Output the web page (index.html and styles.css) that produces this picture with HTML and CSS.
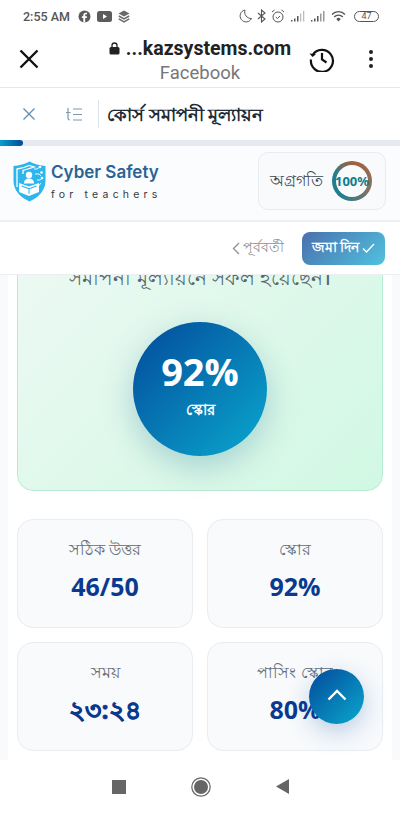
FILE: index.html
```html
<!DOCTYPE html>
<html lang="bn">

<head>
    <meta charset="UTF-8">
    <title>Cyber Safety for teachers</title>
    <link rel="stylesheet" href="styles.css">
</head>

<body>
<div class="phone">
    <div class="status">
        <span class="status__time">2:55 AM</span>
        <svg class="status__app" width="13" height="13" viewBox="0 0 13 13">
            <circle cx="6.5" cy="6.5" r="6" fill="#5c5c5c" />
            <path d="M7.2 12.5V8h1.5l.3-1.8H7.2V5.2c0-.6.2-.9.9-.9H9V2.7H7.7C6 2.7 5.3 3.7 5.3 5v1.2H3.9V8h1.4v4.5z" fill="#fff" />
        </svg>
        <svg class="status__app" width="15" height="11" viewBox="0 0 15 11">
            <rect width="15" height="11" rx="2.5" fill="#5c5c5c" />
            <path d="M6 3l4 2.5L6 8z" fill="#fff" />
        </svg>
        <svg class="status__app" width="12" height="13" viewBox="0 0 12 13">
            <path d="M6 .5l5.5 3L6 6.5l-5.500-3z" fill="#6a6a6a" />
            <path d="M.8 6L6 8.800 11.200 6M.8 8.800L6 11.800l5.200-3" fill="none" stroke="#6a6a6a" stroke-width="1.500" />
        </svg>
        <div class="status__right">
            <svg width="13" height="14" viewBox="0 0 13 14">
                <path d="M6 1a6 6 0 1 0 6.500 8.500A6.500 6.500 0 0 1 6 1z" fill="none" stroke="#555" stroke-width="1" />
            </svg>
            <svg width="9" height="14" viewBox="0 0 9 14">
                <path d="M1 4l7 6-3.500 3V1L8 4l-7 6" fill="none" stroke="#555" stroke-width="1.100" />
            </svg>
            <svg width="14" height="14" viewBox="0 0 14 14">
                <circle cx="7" cy="8" r="5" fill="none" stroke="#555" />
                <path d="M1 3l2.500-2M13 3l-2.500-2M4.800 8l1.700 1.500L9 7" fill="none" stroke="#555" />
            </svg>
            <svg width="15" height="12" viewBox="0 0 15 12">
                <path d="M1 10h1.500v1.500H1zM4 8.500h1.500v3H4zM7 6h1.500v5.500H7z" fill="#555" />
                <path d="M10 3.500h1.300v8H10zM13 1h1.300v10.500H13z" fill="#bbb" />
            </svg>
            <svg width="15" height="12" viewBox="0 0 15 12">
                <path d="M1 10h1.500v1.500H1zM4 8.500h1.500v3H4zM7 6h1.500v5.500H7z" fill="#555" />
                <path d="M10 3.500h1.500v8H10zM13 1h1.500v10.500H13z" fill="#999" />
            </svg>
            <svg class="status__wifi" width="15" height="11" viewBox="0 0 15 11">
                <path d="M1 3.500a9 9 0 0 1 13 0M3.200 6a6 6 0 0 1 8.600 0" fill="none" stroke="#555" stroke-width="1.300" />
                <path d="M5.300 8a3 3 0 0 1 4.400 0L7.500 10.500z" fill="#555" />
            </svg>
            <span class="status__battery">47</span>
        </div>
    </div>

    <header class="browser">
        <svg class="browser__close" width="20" height="20" viewBox="0 0 20 20">
            <path d="M1.500 1.500l17 17M18.500 1.500l-17 17" stroke="#111" stroke-width="2.400" />
        </svg>
        <div class="browser__address">
            <div class="browser__url">
                <svg width="11" height="13" viewBox="0 0 11 13">
                    <path d="M3 5V3.500a2.500 2.500 0 0 1 5 0V5" fill="none" stroke="#222" stroke-width="1.300" />
                    <rect x=".5" y="5" width="10" height="7.500" rx="1.500" fill="#222" />
                </svg>
                <span>...kazsystems.com</span>
            </div>
            <div class="browser__source">Facebook</div>
        </div>
        <svg class="browser__history" width="26" height="26" viewBox="0 0 26 26">
            <path d="M3.600 9A11 11 0 1 1 2 13.500" fill="none" stroke="#111" stroke-width="2.200" />
            <path d="M.5 7.500l3 3.500 3.500-2.800" fill="#111" />
            <path d="M13 7v6.500l4.500 3" fill="none" stroke="#111" stroke-width="2.200" />
        </svg>
        <div class="browser__menu"><i></i><i></i><i></i></div>
    </header>

    <div class="course-bar">
        <svg class="course-bar__close" width="14" height="14" viewBox="0 0 14 14">
            <path d="M1.500 1.500l11 11M12.500 1.500l-11 11" stroke="#5f8bb5" stroke-width="1.300" />
        </svg>
        <svg class="course-bar__list" width="16" height="13" viewBox="0 0 16 13">
            <path d="M2 0v10.500c0 1 .6 1.500 2 1.500M0 4.500h4.500M7 1h9M7 6.500h9M7 12h9" fill="none" stroke="#7c97b3" stroke-width="1.200" />
        </svg>
        <h1 class="course-bar__title">কোর্স সমাপনী মূল্যায়ন</h1>
    </div>

    <div class="progress-line"><div class="progress-line__fill"></div></div>

    <div class="brand-row">
        <div class="brand">
            <svg width="33" height="41" viewBox="0 0 33 41">
                <path d="M16.500 .5C12 3 6 4.500 .5 5V20c0 9 7 16.500 16 20.500C25.500 36.500 32.500 29 32.500 20V5C27 4.500 21 3 16.500 .5z" fill="#2fb5ee" />
                <path d="M4 26V8c4-.5 8-1.500 12-3.500l5 1.500-11 3.500V13" fill="none" stroke="#fff" stroke-width="1.300" />
                <circle cx="16" cy="14" r="3.200" fill="#fff" />
                <path d="M11 22.500c0-3.500 2-5 5-5s5 1.500 5 5z" fill="#fff" />
                <path d="M6 22l10 3.500L26 22v9l-10 4-10-4z" fill="#fff" />
                <path d="M8.500 25l7.500 2.700v5M23.500 25L16 27.700" fill="none" stroke="#2fb5ee" stroke-width="1.100" />
                <path d="M21 8h3l2-1.500M22 13h4l2 2M24 19h3l2-1.500M28 22l-4 5" fill="none" stroke="#fff" stroke-width=".9" />
                <circle cx="27" cy="6" r="1.300" fill="#fff" />
                <circle cx="28.500" cy="11.500" r="1.300" fill="#fff" />
                <circle cx="29" cy="17" r="1.300" fill="#fff" />
            </svg>
            <div>
                <div class="brand__name">Cyber Safety</div>
                <div class="brand__tag">for teachers</div>
            </div>
        </div>
        <div class="progress-card">
            <span class="progress-card__label">অগ্রগতি</span>
            <div class="ring"><div class="ring__hole"><span class="ring__value">100%</span></div></div>
        </div>
    </div>

    <nav class="step-nav">
        <a class="step-nav__prev" href="#">
            <svg width="8" height="13" viewBox="0 0 8 13">
                <path d="M7 1L1.500 6.500 7 12" fill="none" stroke="#8b8f96" stroke-width="1.300" />
            </svg>
            পূর্ববর্তী
        </a>
        <button class="step-nav__submit" type="button">
            জমা দিন
            <svg width="13" height="10" viewBox="0 0 13 10">
                <path d="M1 5.500L4.500 9 12 1" fill="none" stroke="#fff" stroke-width="1.400" />
            </svg>
        </button>
    </nav>

    <main class="content">
        <div class="sheet">
            <section class="result">
                <p class="result__text">সমাপনী মূল্যায়নে সফল হয়েছেন।</p>
                <div class="score">
                    <span class="score__value">92%</span>
                    <span class="score__label">স্কোর</span>
                </div>
            </section>

            <section class="stats">
                <div class="stat">
                    <div class="stat__label">সঠিক উত্তর</div>
                    <div class="stat__value">46/50</div>
                </div>
                <div class="stat">
                    <div class="stat__label">স্কোর</div>
                    <div class="stat__value">92%</div>
                </div>
                <div class="stat">
                    <div class="stat__label">সময়</div>
                    <div class="stat__value stat__value--bn">২৩:২৪</div>
                </div>
                <div class="stat">
                    <div class="stat__label">পাসিং স্কোর</div>
                    <div class="stat__value">80%</div>
                </div>
            </section>
        </div>
        <button class="to-top" type="button">
            <svg width="20" height="12" viewBox="0 0 20 12">
                <path d="M1.500 10.500L10 2l8.500 8.500" fill="none" stroke="#fff" stroke-width="2.400" />
            </svg>
        </button>
    </main>

    <footer class="system-nav">
        <svg width="14" height="14" viewBox="0 0 14 14"><rect width="14" height="14" fill="#666" /></svg>
        <svg width="20" height="20" viewBox="0 0 20 20">
            <circle cx="10" cy="10" r="9.200" fill="none" stroke="#666" stroke-width="1.200" />
            <circle cx="10" cy="10" r="7" fill="#666" />
        </svg>
        <svg width="13" height="15" viewBox="0 0 13 15"><path d="M13 0v15L0 7.500z" fill="#666" /></svg>
    </footer>
</div>
</body>

</html>
```

FILE: styles.css
```css
* {
  box-sizing: border-box;
}

body {
  margin: 0;
  background-color: #FFFFFF;
  font-family: "Noto Sans", Roboto, sans-serif;
}

.phone {
  width: 400px;
  height: 813px;
  display: flex;
  flex-direction: column;
  overflow: hidden;
}

.status {
  height: 30px;
  padding: 2px 21px 0 23px;
  display: flex;
  align-items: center;
  gap: 6px;
  flex: none;
}

.status__time {
  font-family: Roboto, sans-serif;
  font-weight: 500;
  font-size: 12.500px;
  color: #555555;
  margin-right: 2px;
}

.status__right {
  margin-left: auto;
  display: flex;
  align-items: center;
  gap: 5px;
}

.status__wifi {
  margin-left: 1px;
}

.status__battery {
  width: 25px;
  height: 11px;
  margin-left: 3px;
  border: 1px solid #555555;
  border-radius: 6px;
  font-family: Roboto, sans-serif;
  font-size: 9px;
  line-height: 9px;
  text-align: center;
  color: #555555;
}

.browser {
  height: 58px;
  flex: none;
  display: flex;
  align-items: center;
  padding: 0 0 0 19px;
  border-bottom: 1px solid #E8E8E8;
}

.browser__close {
  flex: none;
}

.browser__address {
  width: 210px;
  margin-left: 56px;
  padding-top: 5px;
  text-align: center;
}

.browser__url {
  display: flex;
  justify-content: center;
  align-items: center;
  gap: 6px;
  font-family: Roboto, sans-serif;
  font-weight: 700;
  font-size: 19.500px;
  line-height: 24px;
  white-space: nowrap;
  color: #222222;
}

.browser__source {
  font-family: Roboto, sans-serif;
  font-size: 18.500px;
  line-height: 25px;
  color: #777777;
}

.browser__history {
  margin-left: 4px;
  flex: none;
}

.browser__menu {
  margin-left: 34px;
  display: flex;
  flex-direction: column;
  gap: 3px;
}

.browser__menu i {
  width: 4px;
  height: 4px;
  border-radius: 50%;
  background-color: #222222;
}

.course-bar {
  height: 52px;
  flex: none;
  display: flex;
  align-items: center;
  padding-left: 22px;
}

.course-bar__list {
  margin-left: 30px;
}

.course-bar__title {
  margin: 0 0 0 16px;
  padding-left: 8px;
  border-left: 1px solid #DDE2E8;
  font-weight: 700;
  font-size: 18px;
  line-height: 28px;
  color: #222A33;
}

.progress-line {
  height: 6px;
  flex: none;
  background-color: #E6EAF0;
}

.progress-line__fill {
  width: 23px;
  height: 100%;
  border-radius: 0 3px 3px 0;
  background: linear-gradient(90deg, #0AA0C8 0%, #034A9A 100%);
}

.brand-row {
  height: 76px;
  flex: none;
  display: flex;
  align-items: center;
  justify-content: space-between;
  padding: 0 14px 4px 13px;
  background-color: #FBFCFD;
  border-bottom: 2px solid #EEF0F3;
}

.brand {
  display: flex;
  align-items: center;
  gap: 5px;
}

.brand__name {
  font-family: Inter, sans-serif;
  font-weight: 600;
  font-size: 17px;
  line-height: 22px;
  color: #2A6496;
}

.brand__tag {
  margin-top: 5px;
  font-family: Inter, sans-serif;
  font-size: 10.500px;
  line-height: 14px;
  letter-spacing: 4.200px;
  white-space: nowrap;
  color: #333A40;
}

.progress-card {
  width: 128px;
  height: 58px;
  display: flex;
  align-items: center;
  justify-content: space-between;
  padding: 0 13px 0 11px;
  background-color: #F8FAFC;
  border: 1px solid #E8ECF1;
  border-radius: 10px;
}

.progress-card__label {
  font-size: 16px;
  font-weight: 500;
  color: #3C4650;
}

.ring {
  width: 40px;
  height: 40px;
  padding: 4px;
  border-radius: 50%;
  background: conic-gradient(#A4603A 0deg, #8A7060 110deg, #1F7F90 220deg, #1F7F90 290deg, #A4603A 360deg);
}

.ring__hole {
  width: 32px;
  height: 32px;
  border-radius: 50%;
  background-color: #F8FAFC;
  display: flex;
  align-items: center;
  justify-content: center;
}

.ring__value {
  font-weight: 700;
  font-size: 13px;
  color: #0F7C8C;
}

.step-nav {
  height: 53px;
  flex: none;
  display: flex;
  align-items: center;
  justify-content: flex-end;
  gap: 18px;
  padding-right: 15px;
  background-color: #FFFFFF;
  border-bottom: 1px solid #EDEFF2;
}

.step-nav__prev {
  display: flex;
  align-items: center;
  gap: 3px;
  font-size: 14px;
  font-weight: 500;
  color: #8B8F96;
  text-decoration: none;
}

.step-nav__submit {
  width: 83px;
  height: 33px;
  display: flex;
  align-items: center;
  justify-content: center;
  gap: 3px;
  padding: 0;
  border: none;
  border-radius: 8px;
  background: linear-gradient(135deg, #4A6FAE 0%, #50C2DE 100%);
  font-family: inherit;
  font-weight: 600;
  font-size: 13.500px;
  color: #FFFFFF;
}

.content {
  position: relative;
  flex: 1;
  min-height: 0;
  overflow: hidden;
  padding: 0 8px;
  background-color: #F8FAFC;
}

.sheet {
  display: flow-root;
  height: 100%;
  padding: 0 9px;
  background-color: #FFFFFF;
}

.result {
  height: 235px;
  margin-top: -19px;
  margin-bottom: 28px;
  padding-top: 9px;
  background: linear-gradient(135deg, #ECF9F3 0%, #D1F8E3 100%);
  border: 1px solid #B6ECD6;
  border-radius: 16px;
  display: flex;
  flex-direction: column;
  align-items: center;
}

.result__text {
  margin: 0;
  font-size: 20px;
  font-weight: 500;
  line-height: 24px;
  white-space: nowrap;
  color: #55666A;
}

.score {
  width: 134px;
  height: 134px;
  margin-top: 32px;
  padding-bottom: 12px;
  border-radius: 50%;
  background: linear-gradient(135deg, #034A9A 0%, #0AA8CE 100%);
  box-shadow: 0 10px 32px rgba(0, 90, 140, 0.25);
  display: flex;
  flex-direction: column;
  align-items: center;
  justify-content: center;
  color: #FFFFFF;
}

.score__value {
  font-family: "Open Sans", sans-serif;
  font-weight: 700;
  font-size: 38px;
  line-height: 46px;
}

.score__label {
  margin-top: 6px;
  font-weight: 600;
  font-size: 15px;
  line-height: 18px;
}

.stats {
  display: grid;
  grid-template-columns: 1fr 1fr;
  gap: 14px;
}

.stat {
  height: 109px;
  padding-top: 17px;
  text-align: center;
  background-color: #F8FAFC;
  border: 1px solid #E8EDF2;
  border-radius: 16px;
}

.stat__label {
  font-size: 16px;
  font-weight: 500;
  line-height: 24px;
  color: #5F6B76;
}

.stat__value {
  margin-top: 11px;
  font-family: "Open Sans", sans-serif;
  font-weight: 700;
  font-size: 25px;
  line-height: 28px;
  color: #0A3A8F;
}

.stat__value--bn {
  -webkit-text-stroke: 0.7px #0A3A8F;
}

.to-top {
  position: absolute;
  right: 36px;
  bottom: 36px;
  width: 55px;
  height: 55px;
  padding: 0;
  border: none;
  border-radius: 50%;
  background: linear-gradient(135deg, #034A9A 0%, #0AA8CE 100%);
  box-shadow: 0 8px 24px rgba(3, 74, 154, 0.25);
}

.system-nav {
  height: 53px;
  flex: none;
  display: flex;
  align-items: center;
  justify-content: center;
  gap: 65px;
  background-color: #FFFFFF;
}
```
